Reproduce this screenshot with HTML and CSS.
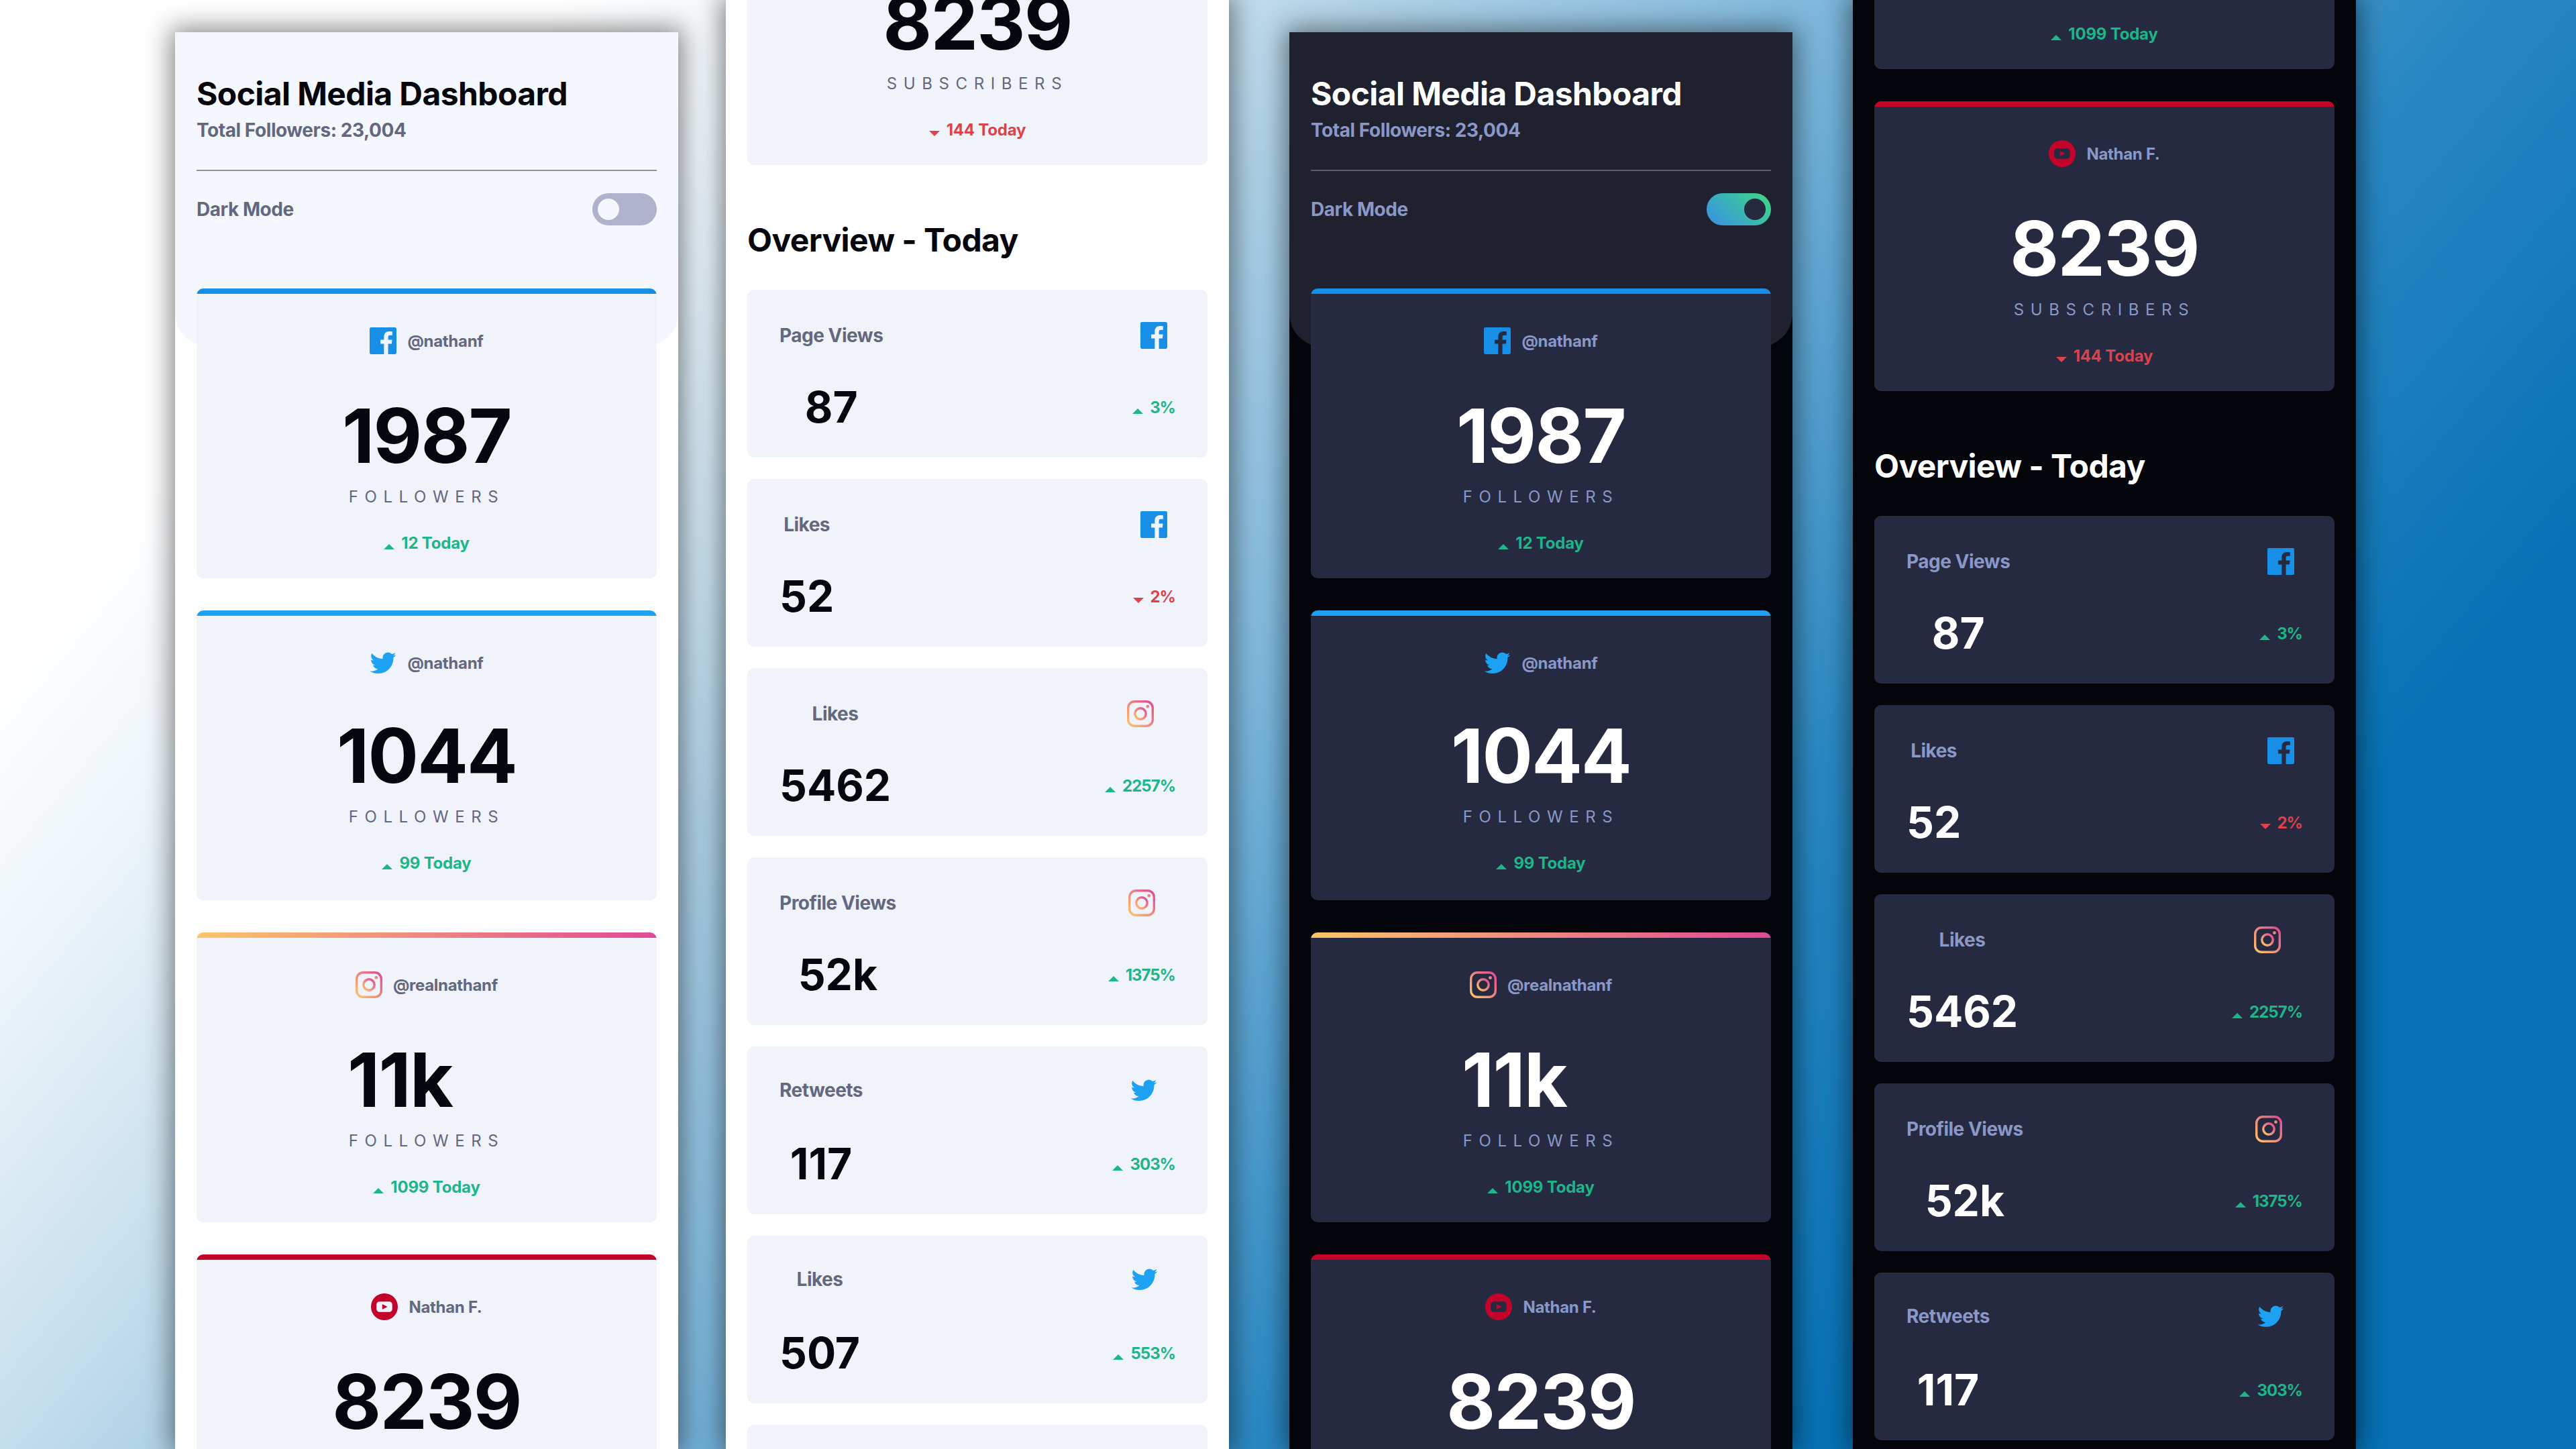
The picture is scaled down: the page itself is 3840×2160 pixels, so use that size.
FILE: index.html
```html
<!DOCTYPE html>
<html lang="en">
<head>
<meta charset="utf-8">
<title>Social Media Dashboard</title>
<link rel="stylesheet" href="styles.css">
</head>
<body>
<svg class="defs" width="0" height="0" aria-hidden="true">
  <defs>
    <linearGradient id="ig" x1="0" y1="1" x2="1" y2="0">
      <stop offset="0" stop-color="#fdc468"/>
      <stop offset="1" stop-color="#df4996"/>
    </linearGradient>
    <symbol id="i-fb" viewBox="0 0 20 20"><path fill="#178fe6" d="M18.896 0H1.104C.494 0 0 .494 0 1.104v17.792C0 19.506.494 20 1.104 20h9.579v-7.745H8.076V9.237h2.607V7.01c0-2.584 1.578-3.99 3.883-3.99 1.104 0 2.052.082 2.329.123v2.7h-1.598c-1.254 0-1.496.596-1.496 1.47v1.927h2.989l-.39 3.018h-2.6V20h5.098c.608 0 1.102-.494 1.102-1.104V1.104C20 .494 19.506 0 18.896 0z"/></symbol>
    <symbol id="i-tw" viewBox="0 0 20 17"><path fill="#1da1f2" d="M20 2.172a8.192 8.192 0 01-2.357.646 4.11 4.11 0 001.805-2.27 8.22 8.22 0 01-2.606.996A4.096 4.096 0 0013.847.248c-2.65 0-4.596 2.472-3.998 5.037A11.648 11.648 0 011.392.999a4.109 4.109 0 001.27 5.478 4.086 4.086 0 01-1.858-.513c-.045 1.9 1.318 3.679 3.291 4.075a4.113 4.113 0 01-1.853.07 4.106 4.106 0 003.833 2.849A8.25 8.25 0 010 14.658a11.616 11.616 0 006.29 1.843c7.618 0 11.923-6.434 11.663-12.205A8.354 8.354 0 0020 2.172z"/></symbol>
    <symbol id="i-ig" viewBox="0 0 20 20"><g fill="none" stroke="url(#ig)" stroke-width="1.7"><rect x=".85" y=".85" width="18.3" height="18.3" rx="4.8"/><circle cx="10" cy="10" r="4.1"/></g><circle cx="15.3" cy="4.7" r="1.2" fill="url(#ig)"/></symbol>
    <symbol id="i-yt" viewBox="0 0 20 20"><path fill="#c4032b" fill-rule="evenodd" d="M10 0a10 10 0 1 0 0 20a10 10 0 1 0 0-20zM6.4 6.1h7.2a2.3 2.3 0 0 1 2.3 2.3v3.2a2.3 2.3 0 0 1-2.3 2.3H6.4a2.3 2.3 0 0 1-2.3-2.3V8.4a2.3 2.3 0 0 1 2.3-2.3zM8.4 8v4l3.9-2z"/></symbol>
  </defs>
</svg>
<main class="stage">

  <section class="panel light pa">
    <header class="head">
      <h1 class="title">Social Media Dashboard</h1>
      <p class="total">Total Followers: 23,004</p>
      <div class="mode"><span>Dark Mode</span><span class="toggle"><span class="knob"></span></span></div>
    </header>
    <div class="content over">
      <article class="card"><div class="strip s-fb"></div><div class="card-body"><div class="who"><svg class="ic"><use href="#i-fb"/></svg><span>@nathanf</span></div><div class="num">1987</div><div class="unit">FOLLOWERS</div><div class="delta up"><i class="tri"></i>12 Today</div></div></article>
      <article class="card"><div class="strip s-tw"></div><div class="card-body"><div class="who"><svg class="ic tw"><use href="#i-tw"/></svg><span>@nathanf</span></div><div class="num">1044</div><div class="unit">FOLLOWERS</div><div class="delta up"><i class="tri"></i>99 Today</div></div></article>
      <article class="card"><div class="strip s-ig"></div><div class="card-body"><div class="who"><svg class="ic"><use href="#i-ig"/></svg><span>@realnathanf</span></div><div class="num off">11k</div><div class="unit">FOLLOWERS</div><div class="delta up"><i class="tri"></i>1099 Today</div></div></article>
      <article class="card"><div class="strip s-yt"></div><div class="card-body from-top"><div class="who"><svg class="ic"><use href="#i-yt"/></svg><span>Nathan F.</span></div><div class="num">8239</div></div></article>
    </div>
  </section>

  <section class="panel light pb">
    <div class="content scroll-b">
      <article class="card"><div class="strip s-yt"></div><div class="card-body"><div class="who"><svg class="ic"><use href="#i-yt"/></svg><span>Nathan F.</span></div><div class="num">8239</div><div class="unit">SUBSCRIBERS</div><div class="delta down"><i class="tri"></i>144 Today</div></div></article>
      <h2 class="ov-title">Overview - Today</h2>
      <div class="ov-list">
        <article class="tile"><span class="t-label">Page Views</span><svg class="ic"><use href="#i-fb"/></svg><span class="t-num">87</span><span class="delta up small"><i class="tri"></i>3%</span></article>
        <article class="tile"><span class="t-label">Likes</span><svg class="ic"><use href="#i-fb"/></svg><span class="t-num">52</span><span class="delta down small"><i class="tri"></i>2%</span></article>
        <article class="tile"><span class="t-label">Likes</span><svg class="ic"><use href="#i-ig"/></svg><span class="t-num">5462</span><span class="delta up small"><i class="tri"></i>2257%</span></article>
        <article class="tile"><span class="t-label">Profile Views</span><svg class="ic"><use href="#i-ig"/></svg><span class="t-num">52k</span><span class="delta up small"><i class="tri"></i>1375%</span></article>
        <article class="tile"><span class="t-label">Retweets</span><svg class="ic tw"><use href="#i-tw"/></svg><span class="t-num">117</span><span class="delta up small"><i class="tri"></i>303%</span></article>
        <article class="tile"><span class="t-label">Likes</span><svg class="ic tw"><use href="#i-tw"/></svg><span class="t-num">507</span><span class="delta up small"><i class="tri"></i>553%</span></article>
        <article class="tile"></article>
      </div>
    </div>
  </section>

  <section class="panel dark pc">
    <header class="head">
      <h1 class="title">Social Media Dashboard</h1>
      <p class="total">Total Followers: 23,004</p>
      <div class="mode"><span>Dark Mode</span><span class="toggle on"><span class="knob"></span></span></div>
    </header>
    <div class="content over">
      <article class="card"><div class="strip s-fb"></div><div class="card-body"><div class="who"><svg class="ic"><use href="#i-fb"/></svg><span>@nathanf</span></div><div class="num">1987</div><div class="unit">FOLLOWERS</div><div class="delta up"><i class="tri"></i>12 Today</div></div></article>
      <article class="card"><div class="strip s-tw"></div><div class="card-body"><div class="who"><svg class="ic tw"><use href="#i-tw"/></svg><span>@nathanf</span></div><div class="num">1044</div><div class="unit">FOLLOWERS</div><div class="delta up"><i class="tri"></i>99 Today</div></div></article>
      <article class="card"><div class="strip s-ig"></div><div class="card-body"><div class="who"><svg class="ic"><use href="#i-ig"/></svg><span>@realnathanf</span></div><div class="num off">11k</div><div class="unit">FOLLOWERS</div><div class="delta up"><i class="tri"></i>1099 Today</div></div></article>
      <article class="card"><div class="strip s-yt"></div><div class="card-body from-top"><div class="who"><svg class="ic"><use href="#i-yt"/></svg><span>Nathan F.</span></div><div class="num">8239</div></div></article>
    </div>
  </section>

  <section class="panel dark pd">
    <div class="content scroll-d">
      <article class="card"><div class="strip s-ig"></div><div class="card-body"><div class="who"><svg class="ic"><use href="#i-ig"/></svg><span>@realnathanf</span></div><div class="num off">11k</div><div class="unit">FOLLOWERS</div><div class="delta up"><i class="tri"></i>1099 Today</div></div></article>
      <article class="card"><div class="strip s-yt"></div><div class="card-body"><div class="who"><svg class="ic"><use href="#i-yt"/></svg><span>Nathan F.</span></div><div class="num">8239</div><div class="unit">SUBSCRIBERS</div><div class="delta down"><i class="tri"></i>144 Today</div></div></article>
      <h2 class="ov-title">Overview - Today</h2>
      <div class="ov-list">
        <article class="tile"><span class="t-label">Page Views</span><svg class="ic"><use href="#i-fb"/></svg><span class="t-num">87</span><span class="delta up small"><i class="tri"></i>3%</span></article>
        <article class="tile"><span class="t-label">Likes</span><svg class="ic"><use href="#i-fb"/></svg><span class="t-num">52</span><span class="delta down small"><i class="tri"></i>2%</span></article>
        <article class="tile"><span class="t-label">Likes</span><svg class="ic"><use href="#i-ig"/></svg><span class="t-num">5462</span><span class="delta up small"><i class="tri"></i>2257%</span></article>
        <article class="tile"><span class="t-label">Profile Views</span><svg class="ic"><use href="#i-ig"/></svg><span class="t-num">52k</span><span class="delta up small"><i class="tri"></i>1375%</span></article>
        <article class="tile"><span class="t-label">Retweets</span><svg class="ic tw"><use href="#i-tw"/></svg><span class="t-num">117</span><span class="delta up small"><i class="tri"></i>303%</span></article>
      </div>
    </div>
  </section>

</main>
</body>
</html>
```

FILE: styles.css
```css
* { box-sizing: border-box; }
html, body { margin: 0; height: 100%; }
body {
  width: 3840px;
  height: 2160px;
  overflow: hidden;
  font-family: Inter, "Liberation Sans", sans-serif;
  background: linear-gradient(130deg, #ffffff 14.8%, #eef5fa 21.7%, #c4deed 32%, #aed0e5 36.6%, #7fb8dc 48%, #2a88c3 65%, #0672b5 80%, #0672b5 100%);
}
.defs { position: absolute; }
.stage { display: flex; align-items: flex-start; height: 2160px; padding-left: 261px; overflow: hidden; }

.panel {
  width: 750px;
  flex: none;
  overflow: hidden;
  background: var(--page);
  box-shadow: 0 0 36px 6px rgba(0, 0, 0, .48);
}
.pa { height: 2112px; margin-top: 48px; }
.pb { height: 2160px; margin-left: 71px; }
.pc { height: 2112px; margin-top: 48px; margin-left: 90px; }
.pd { height: 2160px; margin-left: 90px; }

.light { --page: #ffffff; --head: #f5f7ff; --card: #f0f3fa; --text: #05070d; --muted: #63687e; --rule: #8d909e; }
.dark  { --page: #04050a; --head: #1f212e; --card: #252a41; --text: #ffffff; --muted: #8b97c6; --rule: #5c5e6b; }

.head {
  height: 469px;
  padding: 63px 32px 0;
  background: var(--head);
  border-radius: 0 0 50px 50px;
}
.title { margin: 0; font-size: 48px; line-height: 58px; font-weight: 700; letter-spacing: -.6px; color: var(--text); }
.total { margin: 8px 0 0; padding-bottom: 42px; font-size: 28px; line-height: 34px; font-weight: 700; letter-spacing: -.45px; color: var(--muted); border-bottom: 2px solid var(--rule); }
.mode { display: flex; justify-content: space-between; align-items: center; margin-top: 33px; font-size: 28px; font-weight: 700; letter-spacing: -.45px; color: var(--muted); }

.toggle { display: flex; width: 96px; height: 48px; padding: 8px; border-radius: 24px; background: #aeb3cb; }
.toggle.on { justify-content: flex-end; background: linear-gradient(45deg, #378fe6, #3eda82); }
.knob { width: 32px; height: 32px; border-radius: 50%; background: var(--head); }
.toggle.on .knob { background: #252a41; }

.content { display: flex; flex-direction: column; padding: 0 32px; }
.over { position: relative; margin-top: -87px; gap: 48px; }
.scroll-b { margin-top: -186px; }
.scroll-d { margin-top: -329px; gap: 48px; }
.scroll-d .ov-title { margin-top: 35px; margin-bottom: -3px; }

.card { height: 432px; flex: none; display: flex; flex-direction: column; overflow: hidden; border-radius: 10px; background: var(--card); }
.strip { height: 8px; flex: none; }
.s-fb { background: #178fe6; }
.s-tw { background: #1da1f2; }
.s-ig { background: linear-gradient(90deg, #fdc468, #df4996); }
.s-yt { background: #c4032b; }
.card-body { flex: 1; display: flex; flex-direction: column; align-items: center; justify-content: center; padding-top: 13px; }
.card-body.from-top { justify-content: flex-start; padding-top: 50px; }

.who { display: flex; align-items: center; gap: 16px; font-size: 24px; font-weight: 700; letter-spacing: -.3px; color: var(--muted); }
.ic { display: block; flex: none; width: 40px; height: 40px; }
.ic.tw { height: 33px; }
.num { margin-top: 53px; font-size: 112px; line-height: 136px; font-weight: 700; letter-spacing: -1.8px; color: var(--text); }
.num.off { margin-right: 80px; }
.unit { margin-top: 9px; font-size: 24px; line-height: 30px; letter-spacing: 9.6px; color: var(--muted); }
.delta { display: flex; align-items: center; gap: 10px; margin-top: 39px; font-size: 24px; line-height: 30px; font-weight: 700; letter-spacing: -.2px; }
.delta.small { margin-top: 0; letter-spacing: -1px; }
.up { color: #1eb589; }
.down { color: #dc414c; }
.tri { width: 0; height: 0; margin-top: 10px; border-left: 8px solid transparent; border-right: 8px solid transparent; }
.up .tri { border-bottom: 8px solid #1eb589; }
.down .tri { border-top: 8px solid #dc414c; }

.ov-title { margin: 83px 0 45px; font-size: 48px; line-height: 58px; font-weight: 700; letter-spacing: -.6px; color: var(--text); }
.ov-list { display: flex; flex-direction: column; gap: 32px; }
.tile {
  height: 250px;
  flex: none;
  display: grid;
  grid-template-columns: auto auto;
  grid-template-rows: auto 1fr;
  justify-content: space-between;
  justify-items: center;
  align-items: center;
  padding: 48px 48px 36px;
  border-radius: 10px;
  background: var(--card);
}
.t-label { font-size: 28px; font-weight: 700; letter-spacing: -.5px; color: var(--muted); }
.t-num { align-self: end; font-size: 64px; line-height: 78px; font-weight: 700; color: var(--text); }
.tile .delta { align-self: end; margin-bottom: 23px; }
```
